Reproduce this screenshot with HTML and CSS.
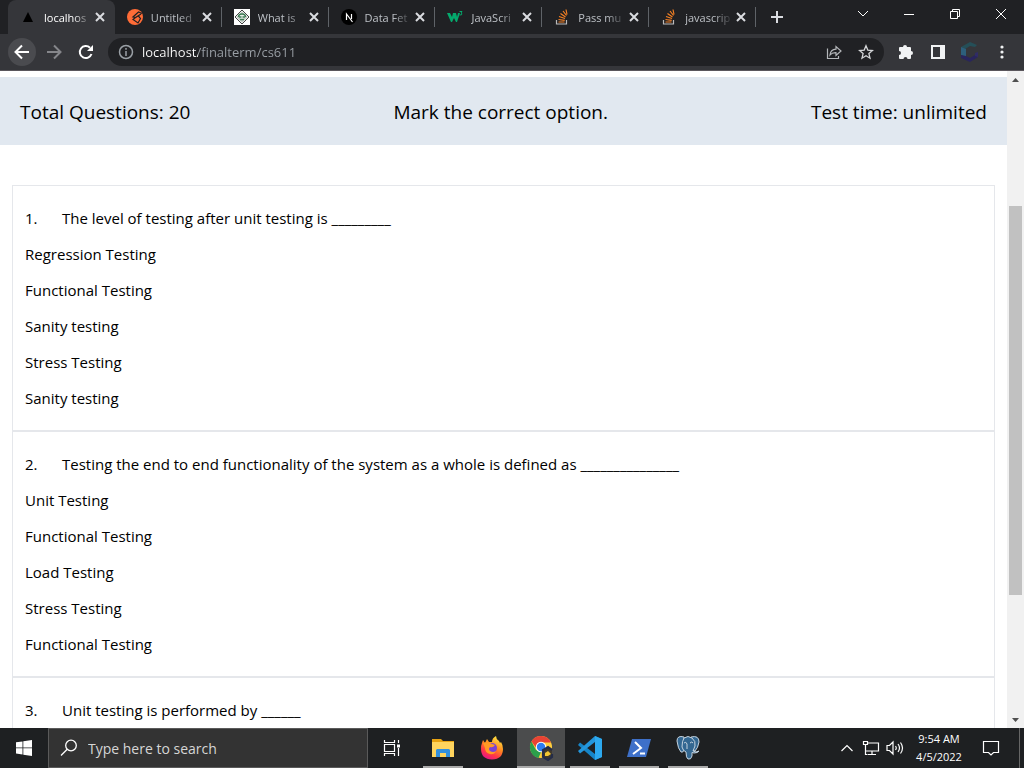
FILE: index.html
```html
<!DOCTYPE html>
<html lang="en">
<head>
	<meta charset="utf-8">
	<title>localhost/finalterm/cs611</title>
	<link rel="stylesheet" href="styles.css">
</head>
<body>
	<!-- tabs -->
	<header class="tabbar">
		<div class="tabs">
			<div class="tab activo">
				<svg class="favicon" viewBox="0 0 16 16"><path d="M8 3l5 10H3z" fill="#000"/></svg>
				<span class="titulo">localhos</span>
				<button class="cerrar" aria-label="Close tab"><svg viewBox="0 0 12 12"><path d="M2 2l8 8M10 2l-8 8"/></svg></button>
			</div>
			<div class="tab">
				<svg class="favicon" viewBox="0 0 16 16"><circle cx="8" cy="8" r="8" fill="#ff6c37"/><path d="M15 4.500L11.500 3 6 8l2.500.5L14 5M8.500 8.500L6 10.500l5 3.500 2.500-4.500L11 6.500" fill="none" stroke="#202124" stroke-width="1.200"/></svg>
				<span class="titulo">Untitled</span>
				<button class="cerrar" aria-label="Close tab"><svg viewBox="0 0 12 12"><path d="M2 2l8 8M10 2l-8 8"/></svg></button>
			</div>
			<div class="tab">
				<svg class="favicon" viewBox="0 0 16 16"><path fill="#fff" d="M0 0h16v16H0z"/><path d="M8 1l7 7-7 7-7-7z" fill="#e8eee9" stroke="#444"/><path d="M8 3.500l4.500 4.500L8 12.500 3.500 8z" fill="none" stroke="#777" stroke-width=".6"/><path d="M4.500 8a3.500 3 0 0 1 7 0M5 8h2.500M8.500 8H11M6 10.500h4" fill="none" stroke="#3f7d55" stroke-width="1.300"/></svg>
				<span class="titulo">What is</span>
				<button class="cerrar" aria-label="Close tab"><svg viewBox="0 0 12 12"><path d="M2 2l8 8M10 2l-8 8"/></svg></button>
			</div>
			<div class="tab">
				<svg class="favicon" viewBox="0 0 16 16"><circle cx="8" cy="8" r="8" fill="#000"/><path d="M5.500 11V5l6 8M10.500 5v5" fill="none" stroke="#fff" stroke-width="1.200"/></svg>
				<span class="titulo">Data Fet</span>
				<button class="cerrar" aria-label="Close tab"><svg viewBox="0 0 12 12"><path d="M2 2l8 8M10 2l-8 8"/></svg></button>
			</div>
			<div class="tab">
				<svg class="favicon" viewBox="0 0 16 16"><path d="M0 4h3l2 4 1-4h3l1 4 1-4h2l-3 9H9L7 9l-2 4H4z" fill="#04aa6d"/><path d="M12.500 2.500h2.500l-1 1.500q1.500.5.5 1.800l-2 .2" fill="none" stroke="#04aa6d"/></svg>
				<span class="titulo">JavaScri</span>
				<button class="cerrar" aria-label="Close tab"><svg viewBox="0 0 12 12"><path d="M2 2l8 8M10 2l-8 8"/></svg></button>
			</div>
			<div class="tab">
				<svg class="favicon" viewBox="0 0 16 16"><path d="M2.500 11v4h10v-4" fill="none" stroke="#bcbbbb" stroke-width="1.200"/><path d="M4.500 13h6M4.500 10.500l6.200.8M5 7.500l6 2M6.500 4.500l5 3.500M9 2l3.500 4.500M12 .5l1 5" stroke="#f48024" stroke-width="1.200"/></svg>
				<span class="titulo">Pass mu</span>
				<button class="cerrar" aria-label="Close tab"><svg viewBox="0 0 12 12"><path d="M2 2l8 8M10 2l-8 8"/></svg></button>
			</div>
			<div class="tab">
				<svg class="favicon" viewBox="0 0 16 16"><path d="M2.500 11v4h10v-4" fill="none" stroke="#bcbbbb" stroke-width="1.200"/><path d="M4.500 13h6M4.500 10.500l6.200.8M5 7.500l6 2M6.500 4.500l5 3.500M9 2l3.500 4.500M12 .5l1 5" stroke="#f48024" stroke-width="1.200"/></svg>
				<span class="titulo">javascrip</span>
				<button class="cerrar" aria-label="Close tab"><svg viewBox="0 0 12 12"><path d="M2 2l8 8M10 2l-8 8"/></svg></button>
			</div>
		</div>
		<button class="nueva" aria-label="New tab"><svg width="12" height="12" viewBox="0 0 12 12"><path d="M6 0v12M0 6h12" stroke="#dadce0" stroke-width="2"/></svg></button>
		<div class="ventana">
			<button aria-label="Search tabs"><svg width="12" height="12" viewBox="0 0 12 12"><path d="M1 3l5 5 5-5"/></svg></button>
			<button aria-label="Minimize"><svg width="12" height="12" viewBox="0 0 12 12"><path d="M1 6.500h10"/></svg></button>
			<button aria-label="Restore"><svg width="12" height="12" viewBox="0 0 12 12"><path d="M1.500 3.500h7v7h-7zM3.500 3.500v-2h7v7h-2"/></svg></button>
			<button aria-label="Close"><svg width="12" height="12" viewBox="0 0 12 12"><path d="M1 1l10 10M11 1L1 11"/></svg></button>
		</div>
	</header>

	<!-- toolbar -->
	<nav class="toolbar">
		<button class="redondo atras" aria-label="Back"><svg width="16" height="16" viewBox="0 0 16 16"><path d="M15 8H2M8 1.500L1.500 8 8 14.500" fill="none" stroke="#fff" stroke-width="2"/></svg></button>
		<button class="redondo" aria-label="Forward"><svg width="16" height="16" viewBox="0 0 16 16"><path d="M1 8h13M8 1.500L14.500 8 8 14.500" fill="none" stroke="#85868a" stroke-width="2"/></svg></button>
		<button class="redondo" aria-label="Reload"><svg width="16" height="16" viewBox="0 0 16 16"><path d="M13.500 10A6 6 0 1 1 12 3.700" fill="none" stroke="#fff" stroke-width="2"/><path d="M15 1v6H9z" fill="#fff"/></svg></button>
		<div class="omnibox">
			<svg width="16" height="16" viewBox="0 0 16 16" fill="none" stroke="#9aa0a6" stroke-width="1.500"><circle cx="8" cy="8" r="6.500"/><path d="M8 7v5M8 4v1.700"/></svg>
			<input class="url" type="text" aria-label="Address" value="localhost/finalterm/cs611">
			<button aria-label="Share"><svg width="16" height="16" viewBox="0 0 16 16" fill="none" stroke="#b4b7ba" stroke-width="1.200"><path d="M1.500 4.500v10h11V12"/><path d="M4 11q.5-5.500 6-5.800V2.500L15 7l-5 4.500V8.700Q6 8.500 4 11z"/></svg></button>
			<button aria-label="Bookmark"><svg width="16" height="16" viewBox="0 0 16 16" fill="none" stroke="#d5d7d9" stroke-width="1.300"><path d="M8 1.800l1.800 4.300 4.700.4-3.600 3.100 1.100 4.600L8 11.800l-4 2.400 1.100-4.600L1.500 6.500l4.700-.4z"/></svg></button>
		</div>
		<div class="extras">
			<button aria-label="Extensions"><svg width="16" height="16" viewBox="0 0 16 16"><path d="M1 4q0-1 1-1h3a2 2 0 0 1 4 0h3q1 0 1 1v3a2 2 0 0 1 0 4v3q0 1-1 1H9.500a2 2 0 0 0-4 0H2q-1 0-1-1v-3a2 2 0 0 0 0-4z" fill="#f1f3f4"/></svg></button>
			<button aria-label="Side panel"><svg width="16" height="16" viewBox="0 0 16 16"><path d="M1 1h14v14H1zM3 3v10h7V3z" fill="#f1f3f4" fill-rule="evenodd"/></svg></button>
			<button aria-label="Profile"><svg width="20" height="22" viewBox="0 0 20 22"><path d="M10 1l7 3-2 2-5-1-5 3-4-2z" fill="#254f58"/><path d="M1 6l5 2v8l-5-2z" fill="#2d5f7c"/><path d="M1 14l5 1 4 2 5-3 3 2-8 5-9-4z" fill="#29255c"/><path d="M15 12l3-1v5l-3-1z" fill="#302c66"/></svg></button>
			<button aria-label="Menu"><svg width="16" height="16" viewBox="0 0 16 16" fill="#f1f3f4"><circle cx="8" cy="3" r="1.600"/><circle cx="8" cy="8" r="1.600"/><circle cx="8" cy="13" r="1.600"/></svg></button>
		</div>
	</nav>

	<!-- page -->
	<div class="vista">
		<main class="pagina">
			<div class="resumen">
				<span>Total Questions: 20</span>
				<span>Mark the correct option.</span>
				<span>Test time: unlimited</span>
			</div>
			<div class="preguntas">
				<section class="pregunta">
					<p><span class="num">1.</span>The level of testing after unit testing is _________</p>
					<p>Regression Testing</p>
					<p>Functional Testing</p>
					<p>Sanity testing</p>
					<p>Stress Testing</p>
					<p>Sanity testing</p>
				</section>
				<section class="pregunta">
					<p><span class="num">2.</span>Testing the end to end functionality of the system as a whole is defined as _______________</p>
					<p>Unit Testing</p>
					<p>Functional Testing</p>
					<p>Load Testing</p>
					<p>Stress Testing</p>
					<p>Functional Testing</p>
				</section>
				<section class="pregunta">
					<p><span class="num">3.</span>Unit testing is performed by ______</p>
				</section>
			</div>
		</main>
		<div class="scroll">
			<svg width="17" height="17" viewBox="0 0 17 17"><path d="M5 11l3.500-4 3.500 4z" fill="#505050"/></svg>
			<div class="riel"><div class="barra"></div></div>
			<svg width="17" height="17" viewBox="0 0 17 17"><path d="M5 7l3.500 4L12 7z" fill="#505050"/></svg>
		</div>
	</div>

	<!-- taskbar -->
	<footer class="taskbar">
		<button class="inicio" aria-label="Start"><svg width="16" height="16" viewBox="0 0 16 16" fill="#fff"><path d="M0 2.300l6.500-.9v6.100H0zM7.300 1.300L16 0v7.500H7.300zM0 8.300h6.500v6.100L0 13.500zM7.300 8.300H16V16l-8.700-1.300z"/></svg></button>
		<label class="buscar">
			<svg width="18" height="18" viewBox="0 0 18 18" fill="none" stroke="#fff" stroke-width="1.300"><circle cx="11" cy="6.500" r="5.300"/><path d="M7.200 10.300L1 16.500"/></svg>
			<input type="text" placeholder="Type here to search" aria-label="Search">
		</label>
		<div class="apps">
			<button class="app tareas" aria-label="Task view"><svg width="18" height="18" viewBox="0 0 18 18" fill="none" stroke="#fff" stroke-width="1.200"><path d="M1.500 5.500h10v7h-10zM1.500 1v2.500h10V1M1.500 17v-2.500h10V17M15.500 1v3M15.500 9v8"/><path d="M14 5.500h3v3h-3z" fill="#fff" stroke="none"/></svg></button>
			<button class="app abierta" aria-label="File Explorer"><svg width="24" height="24" viewBox="0 0 24 24"><path d="M1 3h9l2 2h11v15H1z" fill="#e8a313"/><path d="M1 6h22v15H1z" fill="#ffd45e"/><path d="M5 21v-7l1-1h12l1 1v7h-4v-4H9v4z" fill="#3490dc"/></svg></button>
			<button class="app" aria-label="Firefox"><svg width="24" height="24" viewBox="0 0 24 24">
				<defs><linearGradient id="fuego" x1=".8" y1="0" x2=".3" y2="1"><stop offset="0" stop-color="#ffef45"/><stop offset=".45" stop-color="#ff8a20"/><stop offset=".75" stop-color="#ff3647"/><stop offset="1" stop-color="#e31587"/></linearGradient></defs>
				<path d="M2 7l1-3 2 3 2-4 2 3 3 0q0-4 4-6 0 3 3 5l1 2 1-1q2 3 2 7 0 10-11 10.500Q1 23 1 13q0-4 1-6z" fill="url(#fuego)"/><circle cx="12" cy="12" r="5" fill="#7b42d4"/><path d="M3 7q5-2 9 1l3 1q-2 3-5 2-2 2 0 4 3 2 6 0-2 4-6 3-5-1-5-6z" fill="#ff9a24"/></svg></button>
			<button class="app abierta actual" aria-label="Chrome"><svg width="26" height="26" viewBox="0 0 26 26"><circle cx="13" cy="12" r="11" fill="#ffce3d"/><path d="M3.500 6.500L8 15l5 2-2.500 6A11 11 0 0 1 3.500 6.500z" fill="#2c9f4b"/><path d="M3.500 6.500a11 11 0 0 1 19.500 1H13L9 14z" fill="#e84335"/><circle cx="13" cy="12" r="5.200" fill="#fff"/><circle cx="13" cy="12" r="4.200" fill="#2e7cf0"/><path d="M24 15l-4-3-5 3v7l5 3 4-3v-3" fill="#40382c" stroke="#242c48" stroke-width="2.200"/><path d="M17 18l3-2 3 3-3 2h-3z" fill="#f2c533"/></svg></button>
			<button class="app abierta" aria-label="VS Code"><svg width="24" height="24" viewBox="0 0 24 24"><path d="M17 0l7 3v18l-7 3L0 9l2-2.500L17 18z" fill="#1685c8"/><path d="M17 0v6L2 17.500 0 15z" fill="#2496dc"/><path d="M17 0l7 3v18l-7 3z" fill="#2da9ef"/></svg></button>
			<button class="app abierta" aria-label="PowerShell"><svg width="24" height="24" viewBox="0 0 24 24"><path d="M5 3h19l-5 18H0z" fill="#3e70c9"/><path d="M8 6l6 6-8 6M13 17.500h5" fill="none" stroke="#fff" stroke-width="2"/></svg></button>
			<button class="app abierta" aria-label="PostgreSQL"><svg width="24" height="24" viewBox="0 0 24 24" stroke="#c5d3df"><path d="M8 1Q1-1 1 5q1 8 4 11 2 1 3-2zM15 1q8-2 8 5-1 6-4 9l-3-1z" fill="#336791"/><path d="M8 2q4-3 8 0 4 3 3 8l-2 5q3 2 6 0-1 2-5 2l-2-.5V20q-1 4-4 3-2-1-2-7-3-1-4-5Q6 5 8 2z" fill="#336791"/><path d="M8 7q2-2 3 1v5M14 7q2-2 3 0" fill="none"/></svg></button>
		</div>
		<div class="bandeja">
			<div class="iconos">
				<svg width="18" height="16" viewBox="0 0 18 16"><path d="M3.500 11L9 5.500l5.500 5.500"/></svg>
				<svg width="18" height="16" viewBox="0 0 18 16"><path d="M6 3h10.500v8H3.500V7M10 11v3M6 14.500h8M1.500 1.500h4v3h-4zM3.500 5v9.500h2"/></svg>
				<svg width="18" height="16" viewBox="0 0 18 16"><path d="M1 5.500h2.500L7 2v12l-3.500-3.500H1zM9.500 6q1.500 2 0 4M12 4q3 4 0 8M14.500 2.500q4 5.500 0 11"/></svg>
			</div>
			<time class="reloj" datetime="2022-04-05T09:54">9:54 AM<br>4/5/2022</time>
			<button class="avisos" aria-label="Notifications"><svg width="18" height="18" viewBox="0 0 18 18"><path d="M1.500 2.500h15v11h-5L9 16l-2.500-2.500h-5z"/></svg></button>
			<button class="escritorio" aria-label="Show desktop"></button>
		</div>
	</footer>
</body>
</html>
```

FILE: styles.css
```css
*{box-sizing: border-box;}
body{
	margin: 0;
	height: 100vh;
	display: flex;
	flex-direction: column;
	overflow: hidden;
	background-color: white;
	font-family: "Open Sans", "Noto Sans", sans-serif;
}
button{
	display: flex;
	align-items: center;
	justify-content: center;
	padding: 0;
	border: 0;
	background: none;
}
input{
	flex: 1;
	min-width: 0;
	padding: 0;
	border: 0;
	outline: 0;
	background: none;
	font-family: inherit;
}
svg{flex: none;}

/* tabs */
.tabbar{
	display: flex;
	height: 34px;
	padding-left: 8px;
	background-color: #202124;
}
.tabs{
	display: flex;
	flex: 0 1 748px;
	min-width: 0;
}
.tab{
	display: flex;
	flex: 1;
	min-width: 0;
	align-items: center;
	gap: 8px;
	padding: 0 9px 0 12px;
	position: relative;
	color: #bdc1c6;
}
.tab:not(.activo)::after{
	content: "";
	position: absolute;
	right: 0;
	top: 7px;
	width: 1px;
	height: 20px;
	background-color: #5f6368;
}
.activo{
	color: white;
	background-color: #35363a;
	border-radius: 8px 8px 0 0;
}
.favicon{
	width: 16px;
	height: 16px;
}
.titulo{
	flex: 1;
	min-width: 0;
	margin-right: -6px;
	white-space: nowrap;
	font-size: 11px;
	-webkit-mask-image: linear-gradient(to right, #000 60%, transparent);
	mask-image: linear-gradient(to right, #000 60%, transparent);
}
.cerrar svg{
	width: 12px;
	height: 12px;
	fill: none;
	stroke: #dadce0;
	stroke-width: 2;
}
.nueva{
	width: 42px;
}
.ventana{
	display: flex;
	margin-left: auto;
}
.ventana button{
	width: 46px;
	height: 28px;
}
.ventana svg{
	fill: none;
	stroke: white;
}

/* toolbar */
.toolbar{
	display: flex;
	align-items: center;
	gap: 4px;
	height: 37px;
	padding: 0 6px 0 8px;
	background-color: #35363a;
	border-bottom: 1px solid #5a565c;
}
.redondo{
	width: 28px;
	height: 28px;
	border-radius: 50%;
}
.atras{background-color: #4a4b4f;}
.omnibox{
	display: flex;
	flex: 1;
	align-items: center;
	gap: 16px;
	height: 28px;
	margin-left: 4px;
	padding: 0 10px;
	border-radius: 14px;
	background-color: #202124;
}
.url{
	margin-left: -8px;
	font-size: 13px;
	color: transparent;
	background-image: linear-gradient(to right, white 56px, #9aa0a6 56px);
	-webkit-background-clip: text;
	background-clip: text;
}
.extras{
	display: flex;
	align-items: center;
	margin-left: 2px;
}
.extras button{
	width: 32px;
	height: 28px;
}

/* page */
.vista{
	display: flex;
	flex: 1;
	min-height: 0;
}
.pagina{
	flex: 1;
	overflow: hidden;
	padding-top: 6px;
}
.resumen{
	display: flex;
	justify-content: space-between;
	align-items: center;
	height: 68px;
	padding: 2px 20px 0;
	background-color: #e1e8f0;
	font-size: 19px;
}
.preguntas{
	padding: 40px 12px 0;
	font-size: 15px;
	line-height: 36px;
}
.pregunta{
	padding: 14px 12px;
	border: 1px solid #e5e7eb;
}
.pregunta p{margin: 0;}
.num{
	display: inline-block;
	width: 37px;
}
.scroll{
	display: flex;
	flex-direction: column;
	width: 17px;
	background-color: #f1f1f1;
}
.riel{
	flex: 1;
	padding: 118px 2px 116px;
}
.barra{
	height: 100%;
	background-color: #c1c1c1;
}

/* taskbar */
.taskbar{
	display: flex;
	height: 40px;
	background-color: #1e2022;
	color: white;
}
.inicio{width: 48px;}
.buscar{
	display: flex;
	flex: 0 1 320px;
	align-items: center;
	gap: 10px;
	padding: 0 11px;
	background-color: #333;
	border: 1px solid #5a5a5a;
}
.buscar input{
	font-size: 14px;
	color: white;
}
.buscar input::placeholder{color: #d6d6d6;}
.apps{
	display: flex;
	gap: 1px;
}
.app{
	position: relative;
	width: 48px;
	height: 40px;
}
.tareas{margin-right: 2px;}
.abierta::after{
	content: "";
	position: absolute;
	left: 4px;
	right: 4px;
	bottom: 0;
	height: 2px;
	background-color: #aaa;
}
.actual{background-color: #4b4c4d;}
.actual::after{
	left: 0;
	right: 0;
}
.bandeja{
	display: flex;
	align-items: center;
	margin-left: auto;
}
.bandeja svg{
	fill: none;
	stroke: white;
	stroke-width: 1.2;
}
.iconos{
	display: flex;
	align-items: center;
	gap: 6px;
	margin-right: 11px;
}
.reloj{
	width: 48px;
	text-align: center;
	white-space: nowrap;
	font-size: 11px;
	line-height: 18px;
}
.avisos{
	width: 56px;
	height: 40px;
}
.escritorio{
	width: 5px;
	height: 40px;
	border-left: 1px solid #666;
}
```
